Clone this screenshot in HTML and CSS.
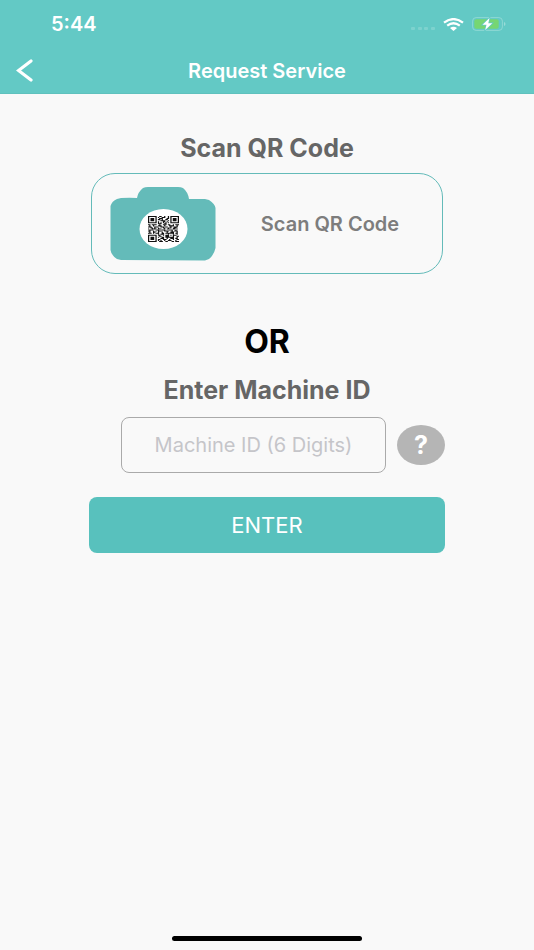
FILE: index.html
```html
<!DOCTYPE html>
<html lang="en">
<head>
    <meta charset="UTF-8">
    <meta name="viewport" content="width=device-width, initial-scale=1.0">
    <title>Request Service</title>
    <link rel="stylesheet" href="styles.css">
</head>
<body>
    <header class="header">
        <div class="status-bar">
            <span class="time">5:44</span>
            <div class="status-icons">
                <svg class="signal" viewBox="0 0 24 4" aria-hidden="true">
                    <rect x="0" y="0" width="4" height="3" rx="1"/>
                    <rect x="7" y="0" width="4" height="3" rx="1"/>
                    <rect x="13" y="0" width="4" height="3" rx="1"/>
                    <rect x="20" y="0" width="4" height="3" rx="1"/>
                </svg>
                <svg class="wifi" viewBox="0 0 21 13" aria-hidden="true">
                    <path d="M1 4.6Q10.5 -2.4 20 4.6M4.2 7.6Q10.5 3 16.8 7.6" fill="none" stroke="#fff" stroke-width="2.3"/>
                    <path d="M7 10Q10.5 7.4 14 10L10.5 13Z" fill="#fff"/>
                </svg>
                <svg class="battery" viewBox="0 0 34 14" aria-hidden="true">
                    <rect x=".6" y=".6" width="29.8" height="12.8" rx="3.5" fill="none" stroke="#8fd8d4"/>
                    <path d="M32 5q1.5 .4 1.5 2t-1.5 2z" fill="#9adbd7"/>
                    <rect x="2.3" y="2.2" width="24.4" height="9.6" rx="2" fill="#76d672"/>
                    <path d="M17.5 1L10.5 7.8h4l-1.300 5.200L20.300 6.200h-4z" fill="#fff" stroke="#63c9c5" stroke-width="1.5" paint-order="stroke"/>
                </svg>
            </div>
        </div>
        <nav class="nav-bar">
            <button class="back" type="button" aria-label="Back">
                <svg viewBox="0 0 18 24" aria-hidden="true">
                    <path d="M15 2L2.5 11.5L15 21" fill="none" stroke="#fff" stroke-width="3.2" stroke-linecap="round"/>
                </svg>
            </button>
            <h1 class="title">Request Service</h1>
        </nav>
    </header>

    <main class="content">
        <h2 class="heading">Scan QR Code</h2>
        <button class="scan-card" type="button">
            <svg class="camera" viewBox="0 -1 106 75" aria-hidden="true">
                <path d="M11 11Q20 10.5 27 11Q28 5 33 1Q35 0 38 0H68Q71 0 73 1Q78 5 79 12H95L99 13Q105 17 105.5 21V61Q104 68 99 72L95 73.5L11 73L7 72Q1 68 .5 63V19Q2 14 7 12Z" fill="#64bbb9"/>
                <ellipse cx="53.5" cy="42" rx="24" ry="20" fill="#fff"/>
                <svg x="38" y="29" width="31" height="26" viewBox="0 0 25 25" preserveAspectRatio="none">
                    <g fill="none" stroke="#111">
                        <path d="M9 .5h2m2 0h1m2 0h1M8 1.5h1m2 0h3m2 0h1M9 2.5h3m3 0h2M8 3.5h2m1 0h1m2 0h2M10 4.5h4m2 0h1M8 5.5h1m3 0h2m1 0h1M8 6.5h1m1 0h1m1 0h1m1 0h1m1 0h1M8 7.5h3m2 0h2"/>
                        <path d="M0 8.5h2m1 0h4m2 0h1m2 0h3m1 0h2m2 0h1m1 0h3M1 9.5h1m2 0h1m3 0h3m2 0h1m3 0h4m2 0h1M0 10.5h3m2 0h3m2 0h3m1 0h2m2 0h1m2 0h3M2 11.5h2m1 0h1m2 0h1m3 0h2m2 0h3m1 0h3M0 12.5h1m2 0h4m1 0h3m2 0h1m1 0h2m3 0h2m1 0h1"/>
                        <path d="M1 13.5h3m3 0h2m2 0h3m3 0h3m2 0h1M0 14.5h2m2 0h1m1 0h1m1 0h3m2 0h4m2 0h1m1 0h3M1 15.5h1m2 0h2m2 0h1m2 0h1m3 0h1m2 0h3m2 0h1M0 16.5h3m1 0h1m1 0h3m2 0h2m1 0h7m1 0h2M8 17.5h1m1 0h3m3 0h1m3 0h1m2 0h1"/>
                        <path d="M8 18.5h2m2 0h1m1 0h3m1 0h1m1 0h3M9 19.5h2m3 0h3m3 0h1m2 0h2M8 20.5h1m2 0h2m1 0h7m2 0h1M10 21.5h3m2 0h1m2 0h3m1 0h2M8 22.5h2m2 0h3m2 0h1m2 0h1m2 0h2M8 23.5h1m1 0h1m2 0h1m2 0h3m3 0h1M9 24.5h3m2 0h2m3 0h2m1 0h3"/>
                        <path d="M.5 .5h6v6h-6zM18.5 .5h6v6h-6zM.5 18.5h6v6h-6z"/>
                    </g>
                    <path d="M2 2h3v3h-3zM20 2h3v3h-3zM2 20h3v3h-3z" fill="#111"/>
                </svg>
            </svg>
            <span class="scan-label">Scan QR Code</span>
        </button>

        <p class="or">OR</p>

        <form class="machine-form">
            <label class="heading" for="machineId">Enter Machine ID</label>
            <div class="field-row">
                <input class="machine-input" type="text" id="machineId" inputmode="numeric" maxlength="6" placeholder="Machine ID (6 Digits)">
                <button class="help" type="button" aria-label="Help">?</button>
            </div>
            <button class="enter" type="submit">ENTER</button>
        </form>
    </main>

    <div class="home-indicator"></div>
</body>
</html>
```

FILE: styles.css
```css
* {
    box-sizing: border-box;
}
body {
    margin: 0;
    min-height: 100vh;
    display: flex;
    flex-direction: column;
    background: #f9f9f9;
    color: #666;
    font-family: Inter, "Liberation Sans", sans-serif;
}
button, input {
    font-family: inherit;
    margin: 0;
}
button {
    border: none;
    padding: 0;
    cursor: pointer;
}
h1, h2, p {
    margin: 0;
}

/* header */
.header {
    background: #63c9c5;
    color: #fff;
    border-bottom: 1px solid #5fc1bd;
}
.status-bar {
    display: flex;
    justify-content: space-between;
    align-items: center;
    height: 48px;
    padding: 0 28px 0 51px;
}
.time {
    font-size: 20px;
    font-weight: 600;
}
.status-icons {
    display: flex;
    align-items: center;
    gap: 8px;
}
.signal {
    width: 24px;
    height: 4px;
    margin-top: 9px;
    fill: #7dd2ce;
}
.wifi {
    width: 21px;
    height: 13px;
}
.battery {
    width: 34px;
    height: 14px;
}
.nav-bar {
    display: grid;
    grid-template-columns: 40px 1fr 40px;
    align-items: center;
    height: 45px;
}
.back {
    height: 45px;
    padding-left: 16px;
    background: none;
    text-align: left;
}
.back svg {
    display: block;
    width: 18px;
    height: 24px;
}
.title {
    font-size: 20px;
    font-weight: 600;
    line-height: 24px;
    text-align: center;
}

/* content */
.content {
    flex: 1;
    width: calc(100% * 2 / 3);
    margin: 0 auto;
    padding-top: 38px;
    text-align: center;
}
.heading {
    display: block;
    font-size: 25px;
    font-weight: 700;
    line-height: 32px;
}
.scan-card {
    display: grid;
    grid-template-columns: 106px 1fr;
    align-items: center;
    width: calc(100% - 4px);
    height: 101px;
    margin: 9px auto 0;
    padding: 0 18px;
    background: none;
    border: 1px solid #64bbb9;
    border-radius: 24px;
    color: #7d7d7d;
}
.camera {
    width: 106px;
    height: 75px;
}
.scan-label {
    padding-left: 20px;
    font-size: 20px;
    font-weight: 600;
}
.or {
    margin-top: 48px;
    color: #000;
    font-size: 32px;
    font-weight: 700;
    line-height: 40px;
}
.machine-form {
    margin-top: 12px;
}
.field-row {
    display: flex;
    align-items: center;
    gap: 11px;
    margin: 11px 0 24px;
    padding-left: 32px;
}
.machine-input {
    flex: 1;
    min-width: 0;
    height: 56px;
    background: none;
    border: 1px solid #aaa;
    border-radius: 8px;
    color: #666;
    font-size: 20px;
    text-align: center;
}
.machine-input::placeholder {
    color: #c5c5c9;
    opacity: 1;
}
.help {
    width: 48px;
    height: 40px;
    border-radius: 50%;
    background: #b5b5b5;
    color: #fff;
    font-size: 25px;
    font-weight: 700;
}
.enter {
    width: 100%;
    height: 56px;
    border-radius: 8px;
    background: #58c1bd;
    color: #fff;
    font-size: 22px;
}

.home-indicator {
    width: 190px;
    height: 5px;
    margin: 0 auto 9px;
    border-radius: 3px;
    background: #000;
}
```
